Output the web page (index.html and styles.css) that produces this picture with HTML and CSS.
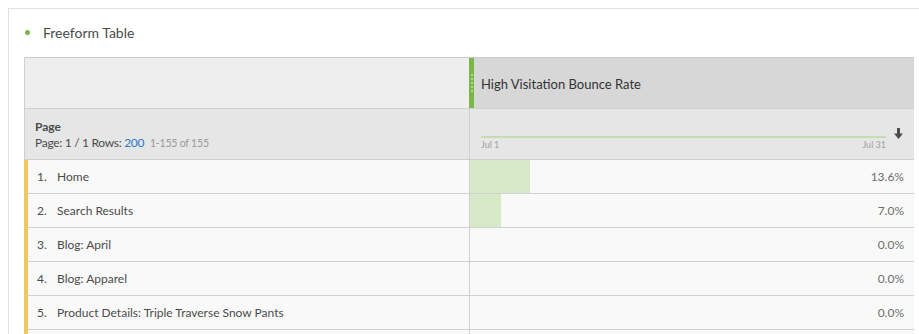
FILE: index.html
```html
<!DOCTYPE html>
<html>
<head>
<meta charset="utf-8">
<link rel="stylesheet" href="styles.css">
</head>
<body>
<div class="panel">
  <div class="title"><span class="dot"></span><span>Freeform Table</span></div>
  <div class="table">
    <div class="h1-left"></div>
    <div class="h1-right">
      <div class="grip"><i></i><i></i><i></i><i></i><i></i></div>
      <span class="metric">High Visitation Bounce Rate</span>
    </div>
    <div class="h2-left">
      <div class="dim">Page</div>
      <div class="pager">Page: 1 / 1 Rows: <span class="blue">200</span> <span class="muted">1-155 of 155</span></div>
    </div>
    <div class="h2-right">
      <div class="spark">
        <div class="line"></div>
        <div class="dates"><span>Jul 1</span><span>Jul 31</span></div>
      </div>
      <svg class="sort" width="9" height="11" viewBox="0 0 9 11"><path d="M3 0h3v5.5h3l-4.5 5.5L0 5.5h3z" fill="#4b4b4b"/></svg>
    </div>

    <div class="cell-l"><span class="num">1.</span><span>Home</span></div>
    <div class="cell-r"><div class="bar" style="width:60px"></div><span class="val">13.6%</span></div>
    <div class="cell-l"><span class="num">2.</span><span>Search Results</span></div>
    <div class="cell-r"><div class="bar" style="width:31px"></div><span class="val">7.0%</span></div>
    <div class="cell-l"><span class="num">3.</span><span>Blog: April</span></div>
    <div class="cell-r"><span class="val">0.0%</span></div>
    <div class="cell-l"><span class="num">4.</span><span>Blog: Apparel</span></div>
    <div class="cell-r"><span class="val">0.0%</span></div>
    <div class="cell-l"><span class="num">5.</span><span>Product Details: Triple Traverse Snow Pants</span></div>
    <div class="cell-r"><span class="val">0.0%</span></div>
    <div class="cell-l"></div>
    <div class="cell-r"></div>
  </div>
</div>
</body>
</html>
```
FILE: styles.css
```css
* { box-sizing: border-box; }
html, body { margin: 0; padding: 0; background: #fff; overflow: hidden; }
body {
  font-family: "Lato", "Open Sans", sans-serif;
  color: #4b4b4b;
  padding: 8px 0 0 8px;
  height: 334px;
}
.panel {
  border-top: 1px solid #e1e1e1;
  border-left: 1px solid #e1e1e1;
  padding: 13px 0 0 15px;
  height: 326px;
  overflow: hidden;
}
.title {
  display: flex;
  align-items: center;
  height: 20px;
  font-size: 14px;
  color: #4b4b4b;
}
.dot {
  width: 5px; height: 5px; border-radius: 50%;
  background: #7ab648;
  margin: 1px 13px 0 1px;
}
.table {
  margin-top: 15px;
  width: 890px;
  display: grid;
  grid-template-columns: 445px 445px;
  grid-template-rows: 52px 51px;
  grid-auto-rows: 34px;
  border-right: 1px solid #cfcfcf;
}
.h1-left, .h1-right {
  border-top: 1px solid #cccccc;
  border-bottom: 1px solid #d0d0d0;
}
.h1-left { background: #eeeeee; border-left: 1px solid #cfcfcf; }
.h1-right {
  background: #d7d7d7;
  display: flex;
  align-items: center;
}
.grip {
  width: 5px;
  align-self: stretch;
  background: #7ab648;
  display: flex;
  flex-direction: column;
  justify-content: center;
  align-items: center;
  gap: 2px;
}
.grip i { display: block; width: 2px; height: 2px; border-radius: 50%; background: #c4e0ac; }
.metric { margin-left: 7px; font-size: 13px; color: #333; margin-top: 2px; }
.h2-left, .h2-right {
  background: #e6e6e6;
  border-bottom: 1px solid #cfcfcf;
}
.h2-left { border-left: 1px solid #cfcfcf; padding: 11px 0 0 10px; }
.dim { font-size: 12px; font-weight: bold; color: #4b4b4b; line-height: 14px; }
.pager { font-size: 12px; color: #4b4b4b; line-height: 16px; margin-top: 1px; letter-spacing: -0.3px; }
.blue { color: #2b76c7; }
.muted { color: #9a9a9a; font-size: 10.5px; letter-spacing: -0.2px; margin-left: 3px; }
.h2-right {
  border-left: 1px solid #d0d0d0;
  display: flex;
  align-items: flex-start;
  padding: 19px 0 0 11px;
}
.spark { width: 405px; }
.line { height: 2px; background: #c6dcb1; margin-top: 8px; }
.dates {
  display: flex; justify-content: space-between;
  font-size: 9px; color: #a0a0a0; margin-top: 1px; line-height: 11px;
}
.sort { margin: 0 0 0 8px; }
.cell-l, .cell-r {
  background: #f9f9f9;
  border-bottom: 1px solid #d0d0d0;
  display: flex;
  align-items: center;
  font-size: 12px;
}
.cell-l { border-left: 4px solid #f2c85c; padding-left: 9px; color: #4b4b4b; }
.num { width: 20px; }
.cell-r { border-left: 1px solid #cfcfcf; position: relative; justify-content: flex-end; padding-right: 10px; }
.bar { position: absolute; left: 0; top: 0; bottom: 0; background: #d8e9c8; }
.val { position: relative; color: #6e6e6e; }
```
